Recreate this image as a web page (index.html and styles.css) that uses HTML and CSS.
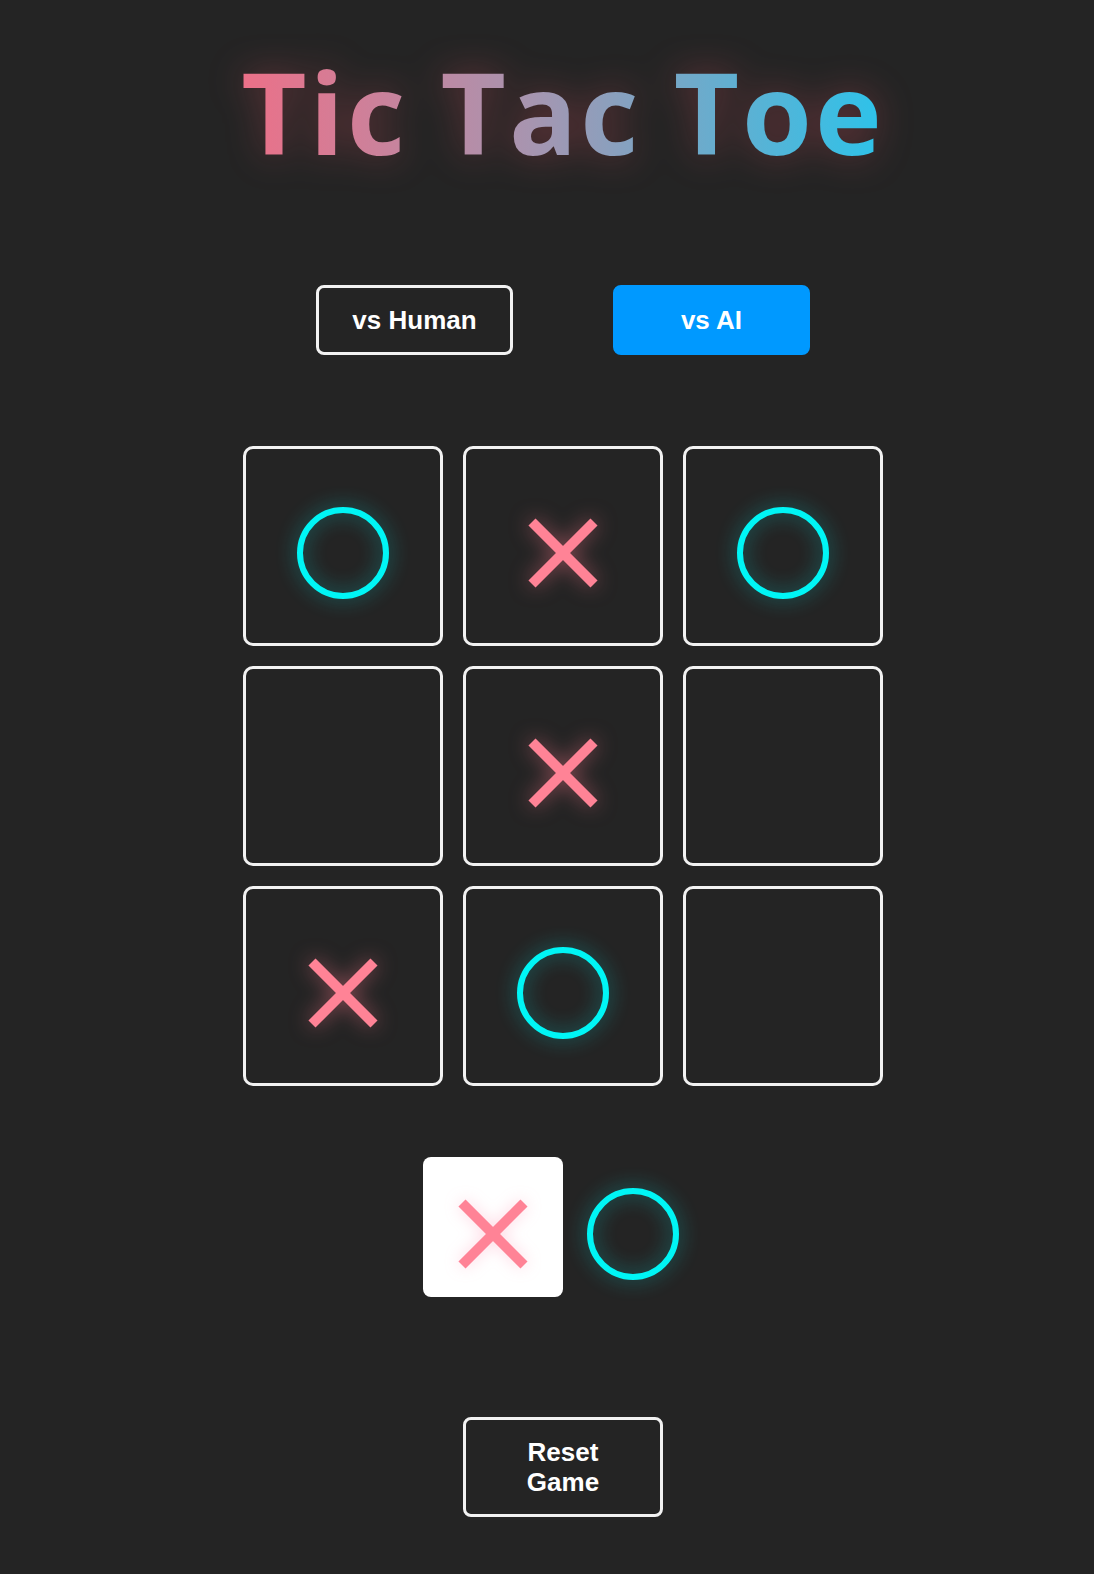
FILE: index.html
```html
<!DOCTYPE html>
<html lang="en">
<head>
<meta charset="utf-8">
<title>Tic Tac Toe</title>
<link rel="stylesheet" href="styles.css">
</head>
<body>
<main class="app">
  <h1 class="title">Tic Tac Toe</h1>
  <div class="modes">
    <button class="mode-btn">vs Human</button>
    <button class="mode-btn active">vs AI</button>
  </div>
  <div class="board">
    <div class="cell"><svg class="mark o" viewBox="0 0 92 92"><circle cx="46" cy="46" r="43"/></svg></div>
    <div class="cell"><svg class="mark x" viewBox="0 0 70 70"><line x1="4" y1="4" x2="66" y2="66"/><line x1="66" y1="4" x2="4" y2="66"/></svg></div>
    <div class="cell"><svg class="mark o" viewBox="0 0 92 92"><circle cx="46" cy="46" r="43"/></svg></div>
    <div class="cell"></div>
    <div class="cell"><svg class="mark x" viewBox="0 0 70 70"><line x1="4" y1="4" x2="66" y2="66"/><line x1="66" y1="4" x2="4" y2="66"/></svg></div>
    <div class="cell"></div>
    <div class="cell"><svg class="mark x" viewBox="0 0 70 70"><line x1="4" y1="4" x2="66" y2="66"/><line x1="66" y1="4" x2="4" y2="66"/></svg></div>
    <div class="cell"><svg class="mark o" viewBox="0 0 92 92"><circle cx="46" cy="46" r="43"/></svg></div>
    <div class="cell"></div>
  </div>
  <div class="turn">
    <div class="turn-box current"><svg class="mark x" viewBox="0 0 70 70"><line x1="4" y1="4" x2="66" y2="66"/><line x1="66" y1="4" x2="4" y2="66"/></svg></div>
    <div class="turn-box"><svg class="mark o" viewBox="0 0 92 92"><circle cx="46" cy="46" r="43"/></svg></div>
  </div>
  <button class="reset-btn">Reset Game</button>
</main>
</body>
</html>
```
FILE: styles.css
```css
html, body {
  margin: 0;
  padding: 0;
  background: #242424;
}

.app {
  display: flex;
  flex-direction: column;
  align-items: center;
  padding-left: 32px;
  padding-top: 36px;
  font-family: "Liberation Sans", Arial, sans-serif;
  color: #fff;
}

.title {
  margin: 0;
  font-family: "Open Sans", "Noto Sans", sans-serif;
  font-weight: 700;
  font-size: 113px;
  line-height: 150px;
  letter-spacing: 3px;
  background: linear-gradient(90deg, #ec7088 0%, #a795b0 45%, #2cc3ea 100%);
  -webkit-background-clip: text;
  background-clip: text;
  color: transparent;
  filter: drop-shadow(0 0 18px rgba(255, 90, 110, 0.3));
}

.modes {
  display: flex;
  gap: 100px;
  margin-top: 99px;
}

.mode-btn {
  width: 197px;
  height: 70px;
  border: 3px solid #f2f2f2;
  border-radius: 8px;
  background: transparent;
  color: #fff;
  font-family: "Liberation Sans", Arial, sans-serif;
  font-weight: 700;
  font-size: 26px;
  padding: 0;
}

.mode-btn.active {
  background: #0099ff;
  border-color: #0099ff;
}

.board {
  display: grid;
  grid-template-columns: repeat(3, 200px);
  grid-auto-rows: 200px;
  gap: 20px;
  margin-top: 91px;
}

.cell {
  box-sizing: border-box;
  border: 3px solid #f2f2f2;
  border-radius: 10px;
  display: flex;
  align-items: center;
  justify-content: center;
  padding-top: 14px;
}

.mark.x {
  width: 70px;
  height: 70px;
  stroke: #ff8396;
  stroke-width: 10;
  filter: drop-shadow(0 0 10px rgba(255, 120, 140, 0.5));
}

.mark.o {
  width: 92px;
  height: 92px;
  fill: none;
  stroke: #00f5f5;
  stroke-width: 6;
  filter: drop-shadow(0 0 10px rgba(0, 240, 240, 0.45));
}

.turn {
  display: flex;
  margin-top: 71px;
}

.turn-box {
  box-sizing: border-box;
  width: 140px;
  height: 140px;
  border-radius: 8px;
  display: flex;
  align-items: center;
  justify-content: center;
  padding-top: 13px;
}

.turn-box.current {
  background: #ffffff;
}

.turn-box.current .mark.x {
  filter: drop-shadow(0 0 8px rgba(255, 120, 160, 0.3));
}

.reset-btn {
  box-sizing: border-box;
  width: 200px;
  margin-top: 120px;
  padding: 17px 40px;
  border: 3px solid #f2f2f2;
  border-radius: 8px;
  background: transparent;
  color: #fff;
  font-family: "Liberation Sans", Arial, sans-serif;
  font-weight: 700;
  font-size: 26px;
  line-height: 30px;
}
```
